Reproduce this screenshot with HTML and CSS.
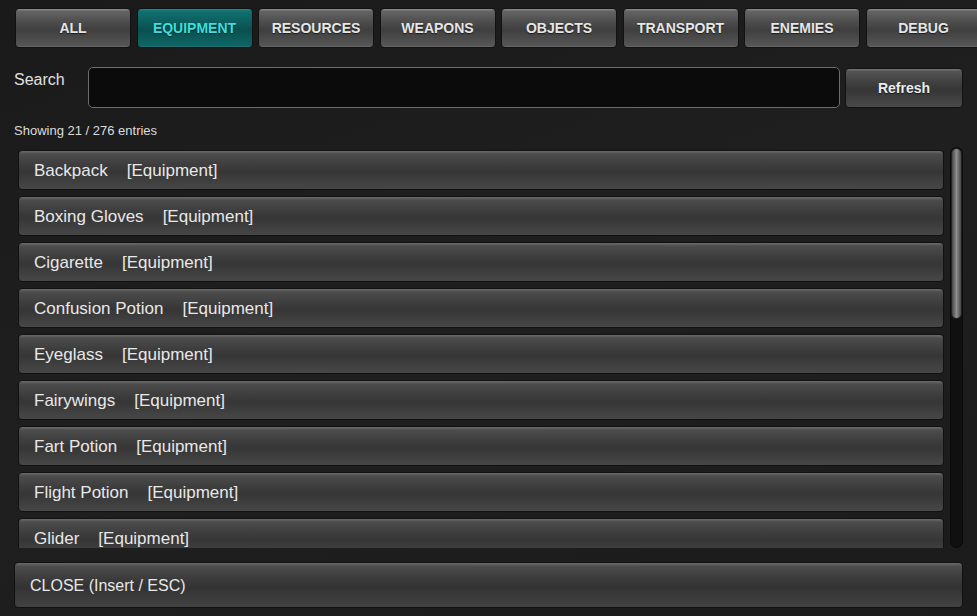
FILE: index.html
```html
<!DOCTYPE html>
<html lang="en">
<head>
    <meta charset="UTF-8">
    <meta name="viewport" content="width=device-width, initial-scale=1.0">
    <title>Spawn Menu</title>
    <link rel="stylesheet" href="styles.css">
</head>
<body>
    <div class="panel">
        <div class="tabs">
            <button class="tab">ALL</button>
            <button class="tab active">EQUIPMENT</button>
            <button class="tab">RESOURCES</button>
            <button class="tab">WEAPONS</button>
            <button class="tab">OBJECTS</button>
            <button class="tab">TRANSPORT</button>
            <button class="tab">ENEMIES</button>
            <button class="tab">DEBUG</button>
        </div>

        <div class="search-row">
            <label class="search-label" for="search">Search</label>
            <input class="search-input" id="search" type="text">
            <button class="refresh-btn">Refresh</button>
        </div>

        <div class="count">Showing 21 / 276 entries</div>

        <div class="list-wrap">
            <div class="list">
                <div class="entry"><span class="name">Backpack</span><span class="cat">[Equipment]</span></div>
                <div class="entry"><span class="name">Boxing Gloves</span><span class="cat">[Equipment]</span></div>
                <div class="entry"><span class="name">Cigarette</span><span class="cat">[Equipment]</span></div>
                <div class="entry"><span class="name">Confusion Potion</span><span class="cat">[Equipment]</span></div>
                <div class="entry"><span class="name">Eyeglass</span><span class="cat">[Equipment]</span></div>
                <div class="entry"><span class="name">Fairywings</span><span class="cat">[Equipment]</span></div>
                <div class="entry"><span class="name">Fart Potion</span><span class="cat">[Equipment]</span></div>
                <div class="entry"><span class="name">Flight Potion</span><span class="cat">[Equipment]</span></div>
                <div class="entry"><span class="name">Glider</span><span class="cat">[Equipment]</span></div>
            </div>
            <div class="scrollbar">
                <div class="thumb"></div>
            </div>
        </div>

        <button class="close-btn">CLOSE (Insert / ESC)</button>
    </div>
</body>
</html>
```

FILE: styles.css
```css
* {
    margin: 0;
    padding: 0;
    box-sizing: border-box;
}

html, body {
    height: 100%;
    overflow: hidden;
}

body {
    font-family: "Liberation Sans", Arial, sans-serif;
    color: #e4e4e4;
    background: linear-gradient(160deg, #1a1a1a 0%, #1f1f1f 50%, #1b1b1b 100%);
}

.panel {
    padding: 8px 14px 0 14px;
}

/* category tabs */
.tabs {
    display: flex;
    gap: 5.5px;
    padding-left: 1px;
    white-space: nowrap;
}

.tab {
    flex: 0 0 116px;
    height: 40px;
    font-family: "Liberation Sans", Arial, sans-serif;
    font-size: 14px;
    font-weight: bold;
    color: #e6e6e6;
    border: 1px solid #121212;
    border-radius: 4px;
    background: linear-gradient(#8e8e8e 0, #646464 6%, #4c4c4c 35%, #3f3f3f 55%, #585858 100%);
    box-shadow: inset 0 -1px 0 rgba(255, 255, 255, 0.08);
    text-shadow: 0 1px 1px rgba(0, 0, 0, 0.6);
    cursor: pointer;
}

.tab.active {
    color: #3fdede;
    background: linear-gradient(#1d8e8e 0, #107070 6%, #0c5a5a 40%, #0a4f4f 55%, #0f6868 100%);
}

/* search */
.search-row {
    display: flex;
    align-items: flex-start;
    margin-top: 19px;
}

.search-label {
    width: 74px;
    font-size: 16px;
    color: #e0e0e0;
    padding-top: 4px;
}

.search-input {
    flex: 1;
    height: 41px;
    background: #0b0b0b;
    border: 1px solid #6c6c6c;
    border-radius: 5px;
    color: #eee;
    outline: none;
}

.refresh-btn {
    flex: 0 0 118px;
    height: 40px;
    margin-left: 5px;
    margin-top: 1px;
    font-family: "Liberation Sans", Arial, sans-serif;
    font-size: 14px;
    font-weight: bold;
    color: #ececec;
    border: 1px solid #121212;
    border-radius: 4px;
    background: linear-gradient(#7a7a7a 0, #545454 6%, #404040 35%, #363636 55%, #4a4a4a 100%);
    text-shadow: 0 1px 1px rgba(0, 0, 0, 0.6);
    cursor: pointer;
}

.count {
    margin-top: 15px;
    font-size: 13px;
    line-height: 15px;
    color: #dcdcdc;
}

/* entry list */
.list-wrap {
    display: flex;
    gap: 6px;
    height: 401px;
    margin-top: 9px;
}

.list {
    flex: 1;
    overflow: hidden;
    padding: 3px 0 0 4px;
}

.entry {
    display: flex;
    align-items: center;
    height: 40px;
    margin-bottom: 6px;
    padding: 2px 0 0 15px;
    font-size: 17px;
    color: #e8e8e8;
    border: 1px solid #111;
    border-radius: 4px;
    background: linear-gradient(#6c6c6c 0, #4c4c4c 8%, #3e3e3e 35%, #363636 55%, #474747 100%);
}

.entry .cat {
    margin-left: 19px;
}

.scrollbar {
    flex: 0 0 13px;
    background: #101010;
    border-radius: 7px;
    border: 1px solid #0a0a0a;
}

.thumb {
    height: 171px;
    border-radius: 6px;
    border: 1px solid #222;
    background: linear-gradient(90deg, #444 0, #6a6a6a 25%, #8e8e8e 50%, #6a6a6a 75%, #444 100%);
}

.close-btn {
    display: block;
    width: 100%;
    height: 46px;
    margin-top: 14px;
    padding: 2px 0 0 15px;
    text-align: left;
    font-family: "Liberation Sans", Arial, sans-serif;
    font-size: 16px;
    color: #e8e8e8;
    border: 1px solid #111;
    border-radius: 4px;
    background: linear-gradient(#6a6a6a 0, #4c4c4c 8%, #3c3c3c 35%, #333 55%, #434343 100%);
    cursor: pointer;
}
```
